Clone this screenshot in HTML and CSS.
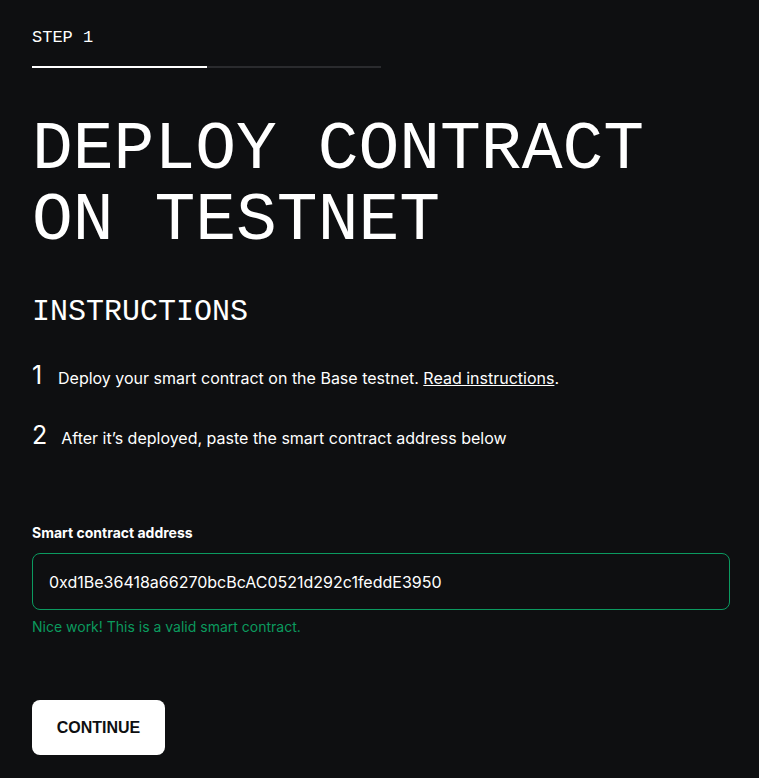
FILE: index.html
```html
<!DOCTYPE html>
<html lang="en">
  <head>
    <meta charset="UTF-8" />
    <meta name="viewport" content="width=device-width, initial-scale=1.0" />
    <title>Deploy contract on testnet</title>
    <link rel="stylesheet" href="styles.css">
  </head>
  <body>
    <div class="container">
      <div class="step">STEP 1</div>
      <div class="progress">
        <div class="progress-fill"></div>
      </div>

      <h1>DEPLOY CONTRACT<br />ON TESTNET</h1>

      <h2>INSTRUCTIONS</h2>
      <ol class="steps">
        <li>
          <span class="num">1</span>
          <span>Deploy your smart contract on the Base testnet. <a href="#">Read instructions</a>.</span>
        </li>
        <li>
          <span class="num">2</span>
          <span>After it’s deployed, paste the smart contract address below</span>
        </li>
      </ol>

      <form class="address-form">
        <label for="address">Smart contract address</label>
        <input type="text" id="address" value="0xd1Be36418a66270bcBcAC0521d292c1feddE3950" />
        <p class="valid">Nice work! This is a valid smart contract.</p>
        <button type="submit">CONTINUE</button>
      </form>
    </div>
  </body>
</html>
```

FILE: styles.css
```css
body {
  margin: 0;
  background-color: #0e0f11;
  color: #ffffff;
  font-family: Inter, "Noto Sans", sans-serif;
}
.container {
  padding: 28px 32px 0;
}
.step {
  font-family: "Liberation Mono", monospace;
  font-size: 17px;
  line-height: 20px;
}
.progress {
  width: 349px;
  height: 2px;
  margin-top: 18px;
  background: #2a2b2e;
}
.progress-fill {
  width: 50%;
  height: 100%;
  background: #ffffff;
}
h1 {
  margin: 46px 0 0;
  font-family: "Liberation Mono", monospace;
  font-weight: 400;
  font-size: 68px;
  line-height: 71px;
}
h2 {
  margin: 38px 0 0;
  font-family: "Liberation Mono", monospace;
  font-weight: 400;
  font-size: 30px;
  line-height: 36px;
}
.steps {
  list-style: none;
  margin: 33px 0 0;
  padding: 0;
}
.steps li {
  display: flex;
  align-items: baseline;
  gap: 14px;
  font-size: 16px;
  line-height: 24px;
  margin-bottom: 33px;
}
.steps .num {
  font-size: 25px;
  font-weight: 400;
  min-width: 12px;
}
.steps a {
  color: #ffffff;
}
.address-form {
  margin-top: 74px;
}
label {
  display: block;
  font-size: 14px;
  font-weight: 700;
  margin-bottom: 12px;
}
input {
  box-sizing: border-box;
  width: 698px;
  height: 57px;
  padding: 0 16px;
  border: 1px solid #0b9a60;
  border-radius: 8px;
  background: transparent;
  color: #ffffff;
  font-family: Inter, "Noto Sans", sans-serif;
  font-size: 16px;
  outline: none;
}
.valid {
  margin: 8px 0 0;
  font-size: 14px;
  color: #0b9a5e;
}
button {
  display: block;
  margin-top: 65px;
  width: 133px;
  height: 55px;
  border: none;
  border-radius: 8px;
  background: #ffffff;
  color: #0e0f11;
  font-family: "Liberation Sans", Arial, sans-serif;
  font-size: 16px;
  font-weight: 700;
  cursor: pointer;
}
```
